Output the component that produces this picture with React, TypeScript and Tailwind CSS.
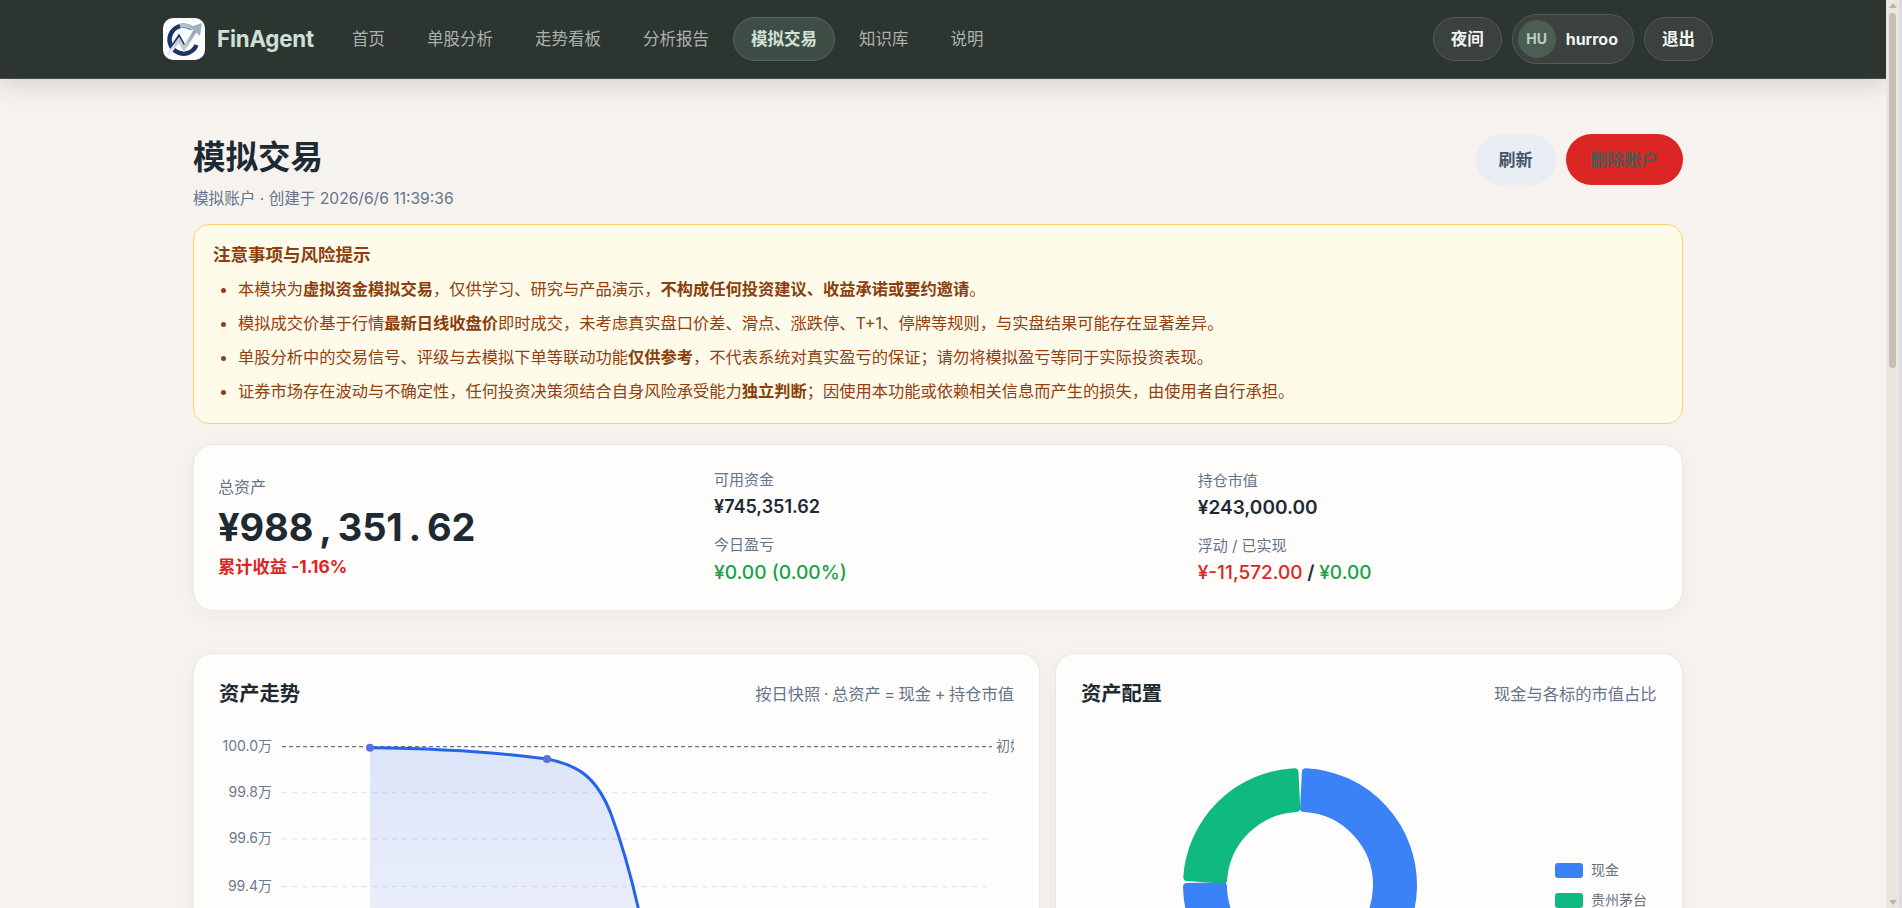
import React from "react";

const navItems = ["首页", "单股分析", "走势看板", "分析报告", "模拟交易", "知识库", "说明"];

const pillar = "flex h-11 items-center rounded-full border border-[#525b56] bg-[#3a413e] px-[17px] text-[16.5px] font-bold text-[#f1f3f1]";

function Logo() {
  return (
    <svg width="42" height="42" viewBox="0 0 42 42" className="shrink-0">
      <defs>
        <linearGradient id="arrow" x1="0" y1="1" x2="1" y2="0">
          <stop offset="0" stopColor="#eef2f5" />
          <stop offset="1" stopColor="#8fa0b2" />
        </linearGradient>
      </defs>
      <rect width="42" height="42" rx="10" fill="#fbfcfd" />
      <path d="M29 10.5A14 14 0 1 0 33.5 27" fill="none" stroke="#1b3566" strokeWidth="4.5" />
      <path d="M17 8A14 14 0 0 1 30 11" fill="none" stroke="#b4bfca" strokeWidth="4" />
      <path d="M8 30 16 18l5 9" fill="none" stroke="#1b3566" strokeWidth="2.5" />
      <path d="M5 37 16 22l5 9L32 13" fill="none" stroke="url(#arrow)" strokeWidth="3.5" />
      <path d="M27 9 39 5l-2 13z" fill="#9fb0c0" />
    </svg>
  );
}

function Header() {
  return (
    <header className="flex h-[79px] shrink-0 items-center border-b border-[#454f4a] bg-[#2d3530] pl-[163px] pr-[173px] shadow-[0_6px_24px_rgba(0,0,0,0.14)]">
      <Logo />
      <span className="ml-3 text-[22.3px] font-bold tracking-[-0.2px] text-[#cfe0d8]">FinAgent</span>
      <nav className="ml-5 flex items-center gap-1.5">
        {navItems.map((item) =>
          item === "模拟交易" ? (
            <span key={item} className="flex h-11 items-center rounded-full border border-[#56665e] bg-[#3e4e46] px-[17px] text-[16.5px] font-bold text-[#d3e3da]">
              {item}
            </span>
          ) : (
            <span key={item} className="flex h-11 items-center border border-transparent px-[17px] text-[16.5px] text-[#a9b2ad]">
              {item}
            </span>
          ),
        )}
      </nav>
      <div className="ml-auto flex items-center gap-[10px]">
        <button className={pillar}>夜间</button>
        <div className="flex h-[50px] items-center gap-[10px] rounded-full border border-[#525b56] bg-[#3a413e] pl-[5px] pr-[15px]">
          <span className="flex size-[38px] items-center justify-center rounded-full bg-[#4c5d54] text-sm font-bold text-[#b7d0c2]">HU</span>
          <span className="text-base font-bold text-[#f1f3f1]">hurroo</span>
        </div>
        <button className={pillar}>退出</button>
      </div>
    </header>
  );
}

function Notice() {
  const strong = "font-bold text-[#8a3f0c]";
  const items = [
    <>本模块为<b className={strong}>虚拟资金模拟交易</b>，仅供学习、研究与产品演示，<b className={strong}>不构成任何投资建议、收益承诺或要约邀请</b>。</>,
    <>模拟成交价基于行情<b className={strong}>最新日线收盘价</b>即时成交，未考虑真实盘口价差、滑点、涨跌停、T+1、停牌等规则，与实盘结果可能存在显著差异。</>,
    <>单股分析中的交易信号、评级与去模拟下单等联动功能<b className={strong}>仅供参考</b>，不代表系统对真实盈亏的保证；请勿将模拟盈亏等同于实际投资表现。</>,
    <>证券市场存在波动与不确定性，任何投资决策须结合自身风险承受能力<b className={strong}>独立判断</b>；因使用本功能或依赖相关信息而产生的损失，由使用者自行承担。</>,
  ];
  return (
    <section className="mt-[13px] rounded-2xl border border-[#fcd468] bg-[#fffbeb] pb-[15px] pl-[19px] pr-5 pt-[17px] text-[#92400e]">
      <h2 className="text-[17.5px] font-bold leading-[26px] text-[#8a3f0c]">注意事项与风险提示</h2>
      <ul className="mt-1 list-disc pl-[25px] text-[16.25px]">
        {items.map((item, i) => (
          <li key={i} className="h-[34px] leading-[34px] marker:text-[#92400e]">{item}</li>
        ))}
      </ul>
    </section>
  );
}

function Stat({ label, children }: { label: string; children: React.ReactNode }) {
  return (
    <div>
      <div className="text-[15px] leading-[22px] text-[#64748b]">{label}</div>
      <div className="mt-[3px] text-lg font-semibold leading-[26px] text-[#1e2a32]">{children}</div>
    </div>
  );
}

function Summary() {
  return (
    <section className="mt-[20px] grid h-[167px] grid-cols-[472px_1fr_1fr] items-center gap-6 rounded-[20px] border border-[#ebe6df] bg-[#fffdfb] px-[24px] shadow-[0_4px_20px_rgba(60,50,30,0.04)]">
      <div>
        <div className="text-base leading-[22px] text-[#64748b]">总资产</div>
        <div className="mt-[5px] text-[38px] font-bold leading-[48px] tracking-[-0.15px] text-[#1e2a32]">
          ¥988<span className="mx-[6px]">,</span>351<span className="mx-[6px]">.</span>62
        </div>
        <div className="mt-[4px] text-[17.3px] font-bold leading-6 text-[#dc2626]">累计收益 -1.16%</div>
      </div>
      <div className="flex flex-col gap-[14px]">
        <Stat label="可用资金">¥745,351.62</Stat>
        <Stat label="今日盈亏"><span className="text-[19.2px] font-medium text-[#16a34a]">¥0.00 (0.00%)</span></Stat>
      </div>
      <div className="flex flex-col gap-[14px]">
        <Stat label="持仓市值"><span className="text-[19px]">¥243,000.00</span></Stat>
        <Stat label="浮动 / 已实现">
          <span className="text-[19px]">
            <span className="font-medium text-[#dc2626]">¥-11,572.00</span> / <span className="font-medium text-[#16a34a]">¥0.00</span>
          </span>
        </Stat>
      </div>
    </section>
  );
}

function CardHead({ title, sub }: { title: string; sub: string }) {
  return (
    <div className="flex h-[26px] items-center justify-between">
      <h3 className="text-[20.25px] font-bold text-[#1e2a32]">{title}</h3>
      <span className="text-[16.25px] text-[#64748b] [word-spacing:-1px]">{sub}</span>
    </div>
  );
}

function TrendChart() {
  const rows: [string, number][] = [
    ["99.8万", 66.7],
    ["99.6万", 113],
    ["99.4万", 160.5],
  ];
  const line = "M151 21.7C210 22.3 270 25 328 33C360 39 378 52 392 88C402 115 412 150 419 181C430 230 440 300 450 360";
  return (
    <svg width="796" height="400" className="mt-[19px] block">
      <defs>
        <linearGradient id="area" gradientUnits="userSpaceOnUse" x1="0" y1="20" x2="0" y2="400">
          <stop offset="0" stopColor="#2563eb" stopOpacity="0.16" />
          <stop offset="1" stopColor="#2563eb" stopOpacity="0.02" />
        </linearGradient>
      </defs>
      {rows.map(([t, y]) => (
        <g key={t}>
          <line x1="63" x2="773" y1={y} y2={y} stroke="#e3e8f0" strokeWidth="1.3" strokeDasharray="5 5" />
          <text x="53" y={y + 4} textAnchor="end" fontSize="14" fill="#6b7a8f">{t}</text>
        </g>
      ))}
      <text x="53" y="25" textAnchor="end" fontSize="14" fill="#6b7a8f">100.0万</text>
      <path d={`${line}V400H151Z`} fill="url(#area)" />
      <line x1="63" x2="773" y1="20.7" y2="20.7" stroke="#64748b" strokeWidth="1.2" strokeDasharray="4 3" />
      <text x="777" y="25" fontSize="14" fill="#6b7a8f">初始</text>
      <path d={line} fill="none" stroke="#2563eb" strokeWidth="3" />
      <circle cx="151" cy="21.7" r="4" fill="#5672dd" />
      <circle cx="328" cy="33" r="4" fill="#5672dd" />
    </svg>
  );
}

function sector(a0: number, a1: number, R: number, r: number) {
  const p = (rad: number, deg: number) => {
    const t = (deg * Math.PI) / 180;
    return `${(219 + rad * Math.sin(t)).toFixed(2)} ${(159 - rad * Math.cos(t)).toFixed(2)}`;
  };
  const big = a1 - a0 > 180 ? 1 : 0;
  return `M${p(R, a0)}A${R} ${R} 0 ${big} 1 ${p(R, a1)}L${p(r, a1)}A${r} ${r} 0 ${big} 0 ${p(r, a0)}Z`;
}

function Donut() {
  return (
    <svg width="575" height="400" className="mt-[19px] block">
      <path d={sector(3, 269, 113, 77)} fill="#3b82f6" stroke="#3b82f6" strokeWidth="8" strokeLinejoin="round" />
      <path d={sector(274, 357.2, 113, 77)} fill="#10b981" stroke="#10b981" strokeWidth="8" strokeLinejoin="round" />
      <rect x="474" y="137" width="28" height="15" rx="3" fill="#3b82f6" />
      <text x="510" y="149" fontSize="14" fill="#6b7280">现金</text>
      <rect x="474" y="167" width="28" height="15" rx="3" fill="#10b981" />
      <text x="510" y="179" fontSize="14" fill="#6b7280">贵州茅台</text>
    </svg>
  );
}

function Charts() {
  const card = "rounded-[20px] border border-[#ebe6df] bg-[#fffdfb] px-[25px] pt-[27px] pb-6 shadow-[0_4px_20px_rgba(60,50,30,0.04)]";
  return (
    <section className="mt-[42px] grid grid-cols-[847px_1fr] gap-[15px]">
      <div className={card}>
        <CardHead title="资产走势" sub="按日快照 · 总资产 = 现金 + 持仓市值" />
        <div className="overflow-hidden"><TrendChart /></div>
      </div>
      <div className={card}>
        <CardHead title="资产配置" sub="现金与各标的市值占比" />
        <Donut />
      </div>
    </section>
  );
}

function Scrollbar() {
  return (
    <div className="flex shrink-0">
      <div className="relative flex h-screen w-[13px] flex-col items-center bg-[#ebe7e0]">
        <span className="mt-[3px] size-0 border-x-[4px] border-b-[5px] border-x-transparent border-b-[#bdb4a8]" />
        <span className="mt-[5px] h-[355px] w-[7px] rounded-full bg-[#c8bfb2]" />
        <span className="mt-auto mb-[3px] size-0 border-x-[4px] border-t-[5px] border-x-transparent border-t-[#bdb4a8]" />
      </div>
      <div className="w-[3px] bg-[#dadbe3]" />
    </div>
  );
}

export default function App() {
  return (
    <div className="flex h-screen overflow-hidden bg-[#f6f3ee] font-['Inter','Noto_Sans_CJK_SC',sans-serif]">
      <div className="flex min-w-0 flex-1 flex-col overflow-hidden">
        <Header />
        <main className="pl-[193px] pr-[203.5px] pt-[55px]">
          <div className="flex items-start justify-between">
            <div>
              <h1 className="text-[32.5px] font-bold leading-[48px] text-[#1e2a32]">模拟交易</h1>
              <p className="mt-[5px] text-[15.6px] leading-6 text-[#64748b]">模拟账户 · 创建于 2026/6/6 11:39:36</p>
            </div>
            <div className="flex gap-[10px]">
              <button className="h-[51px] rounded-full bg-[#e8eef4] px-[23px] pt-[2px] text-[17px] font-bold text-[#475569]">刷新</button>
              <button className="h-[51px] rounded-full bg-[#dc2626] px-[24.5px] pt-[2px] text-[17px] font-bold text-[#4b5a52]">删除账户</button>
            </div>
          </div>
          <Notice />
          <Summary />
          <Charts />
        </main>
      </div>
      <Scrollbar />
    </div>
  );
}
